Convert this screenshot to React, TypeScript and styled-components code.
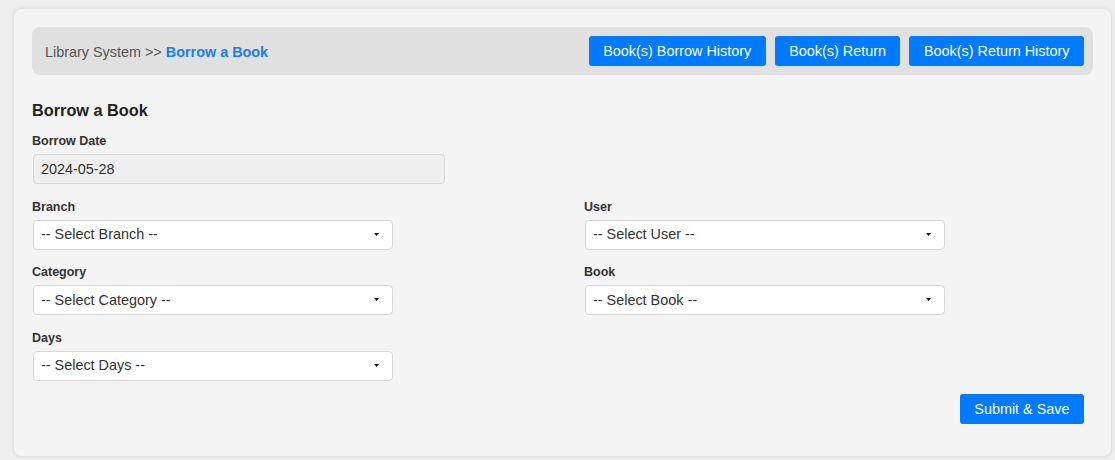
import React from "react";
import styled, { createGlobalStyle } from "styled-components";

const Global = createGlobalStyle`
  html, body { margin: 0; padding: 0; background: #eeeeee; }
  body { font-family: "Liberation Sans", Arial, sans-serif; color: #222; }
  * { box-sizing: border-box; }
`;

const Page = styled.div`
  padding: 9px 4px 4px 14px;
`;

const Card = styled.div`
  background: #f4f4f4;
  border-radius: 8px;
  box-shadow: 0 0 4px rgba(0, 0, 0, 0.12);
  padding: 18px 18px 32px 18px;
`;

const HeaderBar = styled.div`
  display: flex;
  align-items: center;
  justify-content: space-between;
  background: #e0e0e0;
  border-radius: 8px;
  padding: 9px 9px 9px 13px;
`;

const Crumbs = styled.div`
  font-size: 14.4px;
  line-height: 18px;
  padding-top: 1px;
  color: #555;
`;

const Current = styled.span`
  color: #1a7cf7;
  font-weight: bold;
`;

const Actions = styled.div`
  display: flex;
  gap: 9px;
`;

const Button = styled.button`
  height: 30px;
  padding: 0 14.5px;
  border: none;
  border-radius: 3px;
  background: #007bff;
  color: #fff;
  font-family: "Liberation Sans", Arial, sans-serif;
  font-size: 14.4px;
  cursor: pointer;
`;

const Title = styled.h2`
  margin: 25px 0 12px 0;
  font-size: 16.3px;
  line-height: 20px;
  font-weight: bold;
  color: #222;
`;

const Grid = styled.div`
  display: grid;
  grid-template-columns: 552px 1fr;
  row-gap: 13.5px;
`;

const Field = styled.div<{ $span?: boolean }>`
  display: flex;
  flex-direction: column;
  grid-column: ${(p) => (p.$span ? "1 / span 2" : "auto")};
`;

const Label = styled.label`
  font-size: 12.5px;
  line-height: 18px;
  font-weight: bold;
  color: #333;
  margin-bottom: 4px;
`;

const DateInput = styled.div`
  width: 412px;
  height: 30px;
  margin-left: 1px;
  display: flex;
  align-items: center;
  padding: 0 7px;
  background: #efefef;
  border: 1px solid #d8d8d8;
  border-radius: 4px;
  font-size: 14.4px;
  color: #333;
`;

const Select = styled.div`
  width: 360px;
  height: 30px;
  margin-left: 1px;
  display: flex;
  align-items: center;
  justify-content: space-between;
  padding: 0 13px 1px 7px;
  background: #fff;
  border: 1px solid #d8d8d8;
  border-radius: 4px;
  font-size: 14.4px;
  color: #333;
`;

const Footer = styled.div`
  display: flex;
  justify-content: flex-end;
  padding-right: 9px;
  margin-top: 13px;
`;

const Caret = () => (
  <svg width="5" height="3" viewBox="0 0 5 3">
    <path d="M0 0 L5 0 L2.5 3 Z" fill="#111" />
  </svg>
);

const SelectBox = ({ text }: { text: string }) => (
  <Select>
    <span>{text}</span>
    <Caret />
  </Select>
);

export default function App() {
  return (
    <Page>
      <Global />
      <Card>
        <HeaderBar>
          <Crumbs>
            Library System &gt;&gt; <Current>Borrow a Book</Current>
          </Crumbs>
          <Actions>
            <Button>Book(s) Borrow History</Button>
            <Button>Book(s) Return</Button>
            <Button>Book(s) Return History</Button>
          </Actions>
        </HeaderBar>
        <Title>Borrow a Book</Title>
        <Grid>
          <Field $span>
            <Label>Borrow Date</Label>
            <DateInput>2024-05-28</DateInput>
          </Field>
          <Field>
            <Label>Branch</Label>
            <SelectBox text="-- Select Branch --" />
          </Field>
          <Field>
            <Label>User</Label>
            <SelectBox text="-- Select User --" />
          </Field>
          <Field>
            <Label>Category</Label>
            <SelectBox text="-- Select Category --" />
          </Field>
          <Field>
            <Label>Book</Label>
            <SelectBox text="-- Select Book --" />
          </Field>
          <Field>
            <Label>Days</Label>
            <SelectBox text="-- Select Days --" />
          </Field>
        </Grid>
        <Footer>
          <Button>Submit &amp; Save</Button>
        </Footer>
      </Card>
    </Page>
  );
}
